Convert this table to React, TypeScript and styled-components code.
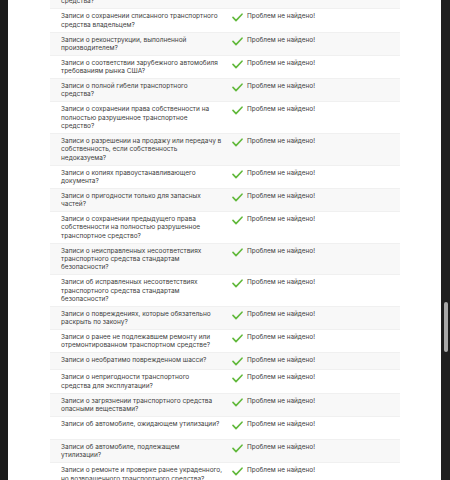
import React from "react";
import styled, { createGlobalStyle } from "styled-components";

const Global = createGlobalStyle`
  html, body { margin: 0; padding: 0; background: #1b1b1b; }
  body { font-family: Inter, "Noto Sans", sans-serif; }
`;

const Frame = styled.div`
  display: flex;
  width: 450px;
  height: 480px;
  overflow: hidden;
  background: #1b1b1b;
`;

const Bezel = styled.div`
  width: 8px;
  flex: none;
  background: #1b1b1b;
`;

const Page = styled.div`
  flex: 1;
  background: #ffffff;
  overflow: hidden;
  padding-left: 42px;
`;

const ScrollTrack = styled.div`
  width: 9px;
  flex: none;
  background: #1f1f1f;
  padding-top: 302px;
  display: flex;
  justify-content: center;
`;

const Thumb = styled.div`
  width: 4px;
  height: 50px;
  margin-left: 1px;
  border-radius: 2px;
  background: #a9a9a9;
`;

const Table = styled.div`
  width: 350px;
  margin-top: -15px;
  display: flex;
  flex-direction: column;
`;

const Row = styled.div<{ $alt: boolean; $minH?: number }>`
  display: grid;
  grid-template-columns: 178px 1fr;
  background: ${(p) => (p.$alt ? "#f8f8f8" : "#ffffff")};
  border-top: 1px solid #f0f0f0;
  min-height: ${(p) => p.$minH ?? 17}px;
  box-sizing: border-box;
`;

const Question = styled.div`
  padding: 3px 0 2.7px 11px;
  font-size: 6.5px;
  line-height: 8.3px;
  color: #404040;
  white-space: nowrap;
`;

const Status = styled.div`
  display: flex;
  align-items: flex-start;
  gap: 4px;
  padding: 3px 0 2.7px 4px;
  font-size: 6.4px;
  line-height: 8.3px;
  color: #404040;
`;

const Check = styled.svg`
  width: 11px;
  height: 9px;
  flex: none;
  margin-top: 1px;
`;

const rows: { q: string[]; minH?: number }[] = [
  { q: ["Записи о краже или угоне транспортного", "средства?"] },
  { q: ["Записи о сохранении списанного транспортного", "средства владельцем?"] },
  { q: ["Записи о реконструкции, выполненной", "производителем?"] },
  { q: ["Записи о соответствии зарубежного автомобиля", "требованиям рынка США?"] },
  { q: ["Записи о полной гибели транспортного", "средства?"] },
  { q: ["Записи о сохранении права собственности на", "полностью разрушенное транспортное", "средство?"] },
  { q: ["Записи о разрешении на продажу или передачу в", "собственность, если собственность", "недоказуема?"] },
  { q: ["Записи о копиях правоустанавливающего", "документа?"] },
  { q: ["Записи о пригодности только для запасных", "частей?"] },
  { q: ["Записи о сохранении предыдущего права", "собственности на полностью разрушенное", "транспортное средство?"] },
  { q: ["Записи о неисправленных несоответствиях", "транспортного средства стандартам", "безопасности?"] },
  { q: ["Записи об исправленных несоответствиях", "транспортного средства стандартам", "безопасности?"] },
  { q: ["Записи о повреждениях, которые обязательно", "раскрыть по закону?"] },
  { q: ["Записи о ранее не подлежавшем ремонту или", "отремонтированном транспортном средстве?"] },
  { q: ["Записи о необратимо поврежденном шасси?"] },
  { q: ["Записи о непригодности транспортного", "средства для эксплуатации?"] },
  { q: ["Записи о загрязнении транспортного средства", "опасными веществами?"] },
  { q: ["Записи об автомобиле, ожидающем утилизации?"], minH: 23 },
  { q: ["Записи об автомобиле, подлежащем", "утилизации?"] },
  { q: ["Записи о ремонте и проверке ранее украденного,", "но возвращенного транспортного средства?"] },
];

const CheckIcon = () => (
  <Check viewBox="0 0 11 9">
    <path d="M1 4.4 L4 7.6 L10 1.2" fill="none" stroke="#62b93c" strokeWidth="1.6" strokeLinecap="round" strokeLinejoin="round" />
  </Check>
);

export default function App() {
  return (
    <>
      <Global />
      <Frame>
        <Bezel />
        <Page>
          <Table>
            {rows.map((r, i) => (
              <Row key={i} $alt={i % 2 === 0} $minH={r.minH}>
                <Question>
                  {r.q.map((line, j) => (
                    <React.Fragment key={j}>
                      {j > 0 && <br />}
                      {line}
                    </React.Fragment>
                  ))}
                </Question>
                <Status>
                  <CheckIcon />
                  <span>Проблем не найдено!</span>
                </Status>
              </Row>
            ))}
          </Table>
        </Page>
        <ScrollTrack>
          <Thumb />
        </ScrollTrack>
      </Frame>
    </>
  );
}
